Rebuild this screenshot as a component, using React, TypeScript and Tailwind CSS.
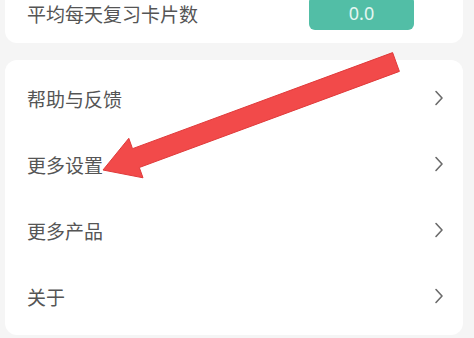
import React from "react";

const font = { fontFamily: '"Noto Sans CJK SC", "Noto Sans", sans-serif' };

function Chevron() {
  return (
    <svg width="10" height="16" viewBox="0 0 10 16" className="shrink-0">
      <path d="M2 1.5 L8 8 L2 14.5" fill="none" stroke="#6b6b6b" strokeWidth="1.6" strokeLinecap="round" strokeLinejoin="round" />
    </svg>
  );
}

function Row({ label }: { label: string }) {
  return (
    <div className="flex h-[66px] items-center justify-between pl-[22px] pr-[19px]">
      <span className="text-[19px] leading-none text-[#555555]">{label}</span>
      <Chevron />
    </div>
  );
}

export default function App() {
  return (
    <div className="relative h-[338px] w-[474px] overflow-hidden bg-[#f5f5f5]" style={font}>
      <div className="-mt-[4px] ml-[5px] mr-[11px] flex flex-col rounded-b-[12px] bg-white pb-[13px] pl-[22px] pr-[49px]">
        <div className="flex h-[34px] items-center justify-between">
          <span className="text-[19px] leading-none text-[#555555]">平均每天复习卡片数</span>
          <div className="flex h-[34px] w-[105px] items-center justify-center rounded-[6px] bg-[#52bea6]">
            <span className="text-[18px] leading-none text-[#e4f6f1]" style={{ fontFamily: '"Noto Sans", sans-serif' }}>0.0</span>
          </div>
        </div>
      </div>
      <div className="ml-[5px] mr-[11px] mt-[17px] flex flex-col rounded-[12px] bg-white pb-[6px] pt-[5px]">
        <Row label="帮助与反馈" />
        <Row label="更多设置" />
        <Row label="更多产品" />
        <Row label="关于" />
      </div>
      <svg className="pointer-events-none absolute left-0 top-0" width="474" height="338" viewBox="0 0 474 338">
        <polygon
          points="392.6,52.6 399.4,71.4 139.3,167.5 143,177.8 103,170 128.8,138.3 132.5,148.7"
          fill="#f24a4a"
          stroke="#e03a3a"
          strokeWidth="1"
          strokeLinejoin="round"
        />
      </svg>
    </div>
  );
}
